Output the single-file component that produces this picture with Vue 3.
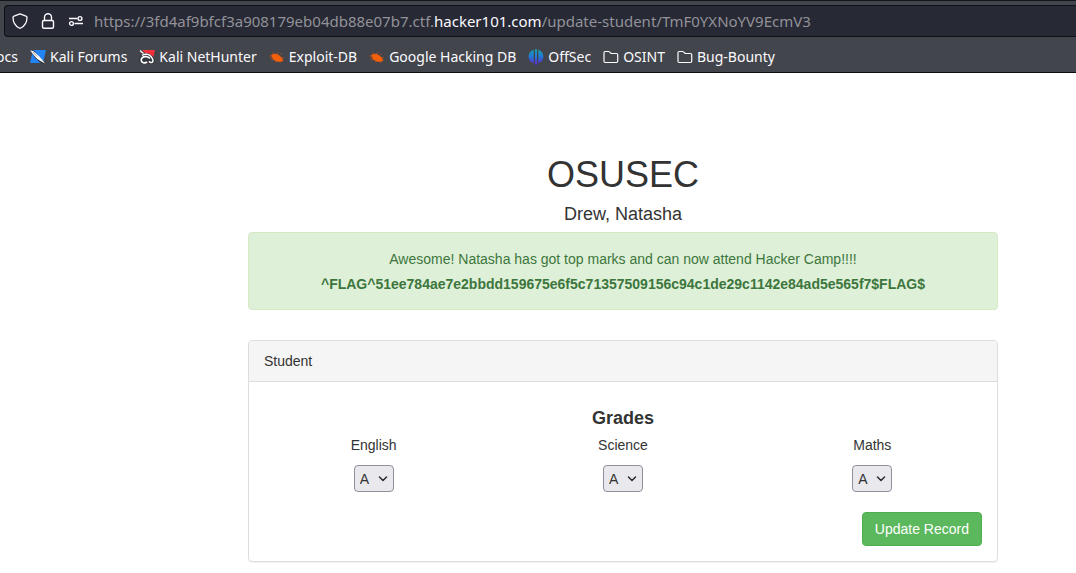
<script setup>
import { reactive } from 'vue'

const bookmarks = [
  { icon: 'forums', label: 'Kali Forums' },
  { icon: 'nethunter', label: 'Kali NetHunter' },
  { icon: 'exploit', label: 'Exploit-DB' },
  { icon: 'exploit', label: 'Google Hacking DB' },
  { icon: 'offsec', label: 'OffSec' },
  { icon: 'folder', label: 'OSINT' },
  { icon: 'folder', label: 'Bug-Bounty' },
]

const grades = reactive([
  { id: 'english', subject: 'English', value: 'A' },
  { id: 'science', subject: 'Science', value: 'A' },
  { id: 'maths', subject: 'Maths', value: 'A' },
])
const options = ['A', 'B', 'C', 'D', 'E', 'F']
</script>

<template>
  <div class="window">
    <header class="chrome">
      <div class="address">
        <button class="tool" type="button" aria-label="Tracking protection">
          <svg width="16" height="16" viewBox="0 0 16 16" fill="none" stroke="#fbfbfe" stroke-width="1.3" stroke-linejoin="round">
            <path d="M8 .8 14 3.1c.6.2 1 .6 1 1.2 0 5-2.300 8.700-6.200 10.700-.5.3-1.100.3-1.600 0C3.300 13 1 9.300 1 4.300c0-.6.4-1 1-1.200z" />
          </svg>
        </button>
        <button class="tool" type="button" aria-label="Site security">
          <svg width="16" height="16" viewBox="0 0 16 16" fill="none" stroke="#fbfbfe" stroke-width="1.4">
            <rect x="2.500" y="7.500" width="11" height="7.800" rx="1.500" />
            <path d="M4.500 7.500V4.200a3.500 3.500 0 0 1 7 0v3.300" />
          </svg>
        </button>
        <button class="tool" type="button" aria-label="Site permissions">
          <svg width="16" height="16" viewBox="0 0 16 16" fill="none" stroke="#fbfbfe" stroke-width="1.4">
            <path d="M1 5.500h8.500M6.500 10.500H15" />
            <circle cx="12" cy="5.500" r="1.900" />
            <circle cx="3.500" cy="10.500" r="1.900" />
          </svg>
        </button>
        <div class="url" role="textbox" aria-label="Address" contenteditable="true" spellcheck="false">https://3fd4af9bfcf3a908179eb04db88e07b7.ctf.<span class="domain">hacker101.com</span>/update-student/TmF0YXNoYV9EcmV3</div>
      </div>
      <nav class="bookmarks" aria-label="Bookmarks">
        <a class="bookmark clipped" href="#">Docs</a>
        <a v-for="b in bookmarks" :key="b.label" class="bookmark" href="#">
          <svg v-if="b.icon === 'forums'" width="16" height="16" viewBox="0 0 16 16">
            <path d="M3 1h13l-3 13H0z" fill="#2384f5" />
            <path d="M0 1 4 1.500 8.500 7l7.500 7.500-2 1-4-2-5-4.500z" fill="#30343c" />
            <path d="m0 1.300 3.500 1L9 7l3 3.500 3.300 4.200-4.800-2.700-3.300-2L4.500 7z" fill="#fff" />
            <path d="m3 3 4 4.500" stroke="#8d939c" stroke-width=".8" />
          </svg>
          <svg v-else-if="b.icon === 'nethunter'" width="16" height="16" viewBox="0 0 16 16">
            <path d="M3 1h13l-3 13H2z" fill="#f3303b" />
            <path d="M0 1h3l3 3 4 .5 4 3 2 4-2 3-3 .5-3-2-3 2H3L0 12l1-5 2-2z" fill="#30343c" />
            <path d="M1 1.500 4.500 4.500M3 6.500C6 4.500 10 5 12 7.500s2.300 4.500 1.500 5.500-2.500.5-3.500-.8" fill="none" stroke="#fff" stroke-width="1.500" />
            <path d="M11 9.500C9 7.500 5.500 7 3.500 8.500s-1.700 4.500.8 5.200c1.500.4 2.700 0 3.700-.9" fill="none" stroke="#fff" stroke-width="1.700" />
          </svg>
          <svg v-else-if="b.icon === 'exploit'" width="16" height="16" viewBox="0 0 16 16">
            <path d="M2 6 5 4.700 8 5l3 2 2.500 2.500.5 2.500-3 1-3.500-.5L4 10.500z" fill="#f2600c" />
            <path d="m5 5-2-1.500M8 5l1-2M10 6.500l3-2M12 8.500h3M13 11l2 .5M11 12l1 2M7 12l-1 1.500M4.500 10.500 2 11M3 7H0M3.500 8.500 1 9" fill="none" stroke="#b54c1e" stroke-width=".7" />
          </svg>
          <svg v-else-if="b.icon === 'offsec'" width="16" height="16" viewBox="0 0 16 16">
            <defs>
              <linearGradient id="offsec-fill" x1="0" y1="0" x2="0" y2="1">
                <stop offset="0" stop-color="#16a8b5" />
                <stop offset=".5" stop-color="#2474d2" />
                <stop offset="1" stop-color="#6527d8" />
              </linearGradient>
            </defs>
            <path d="M5.700.8v13.400C2.800 13.200.6 11 .6 7.500S2.800 1.800 5.700.8zM7 .3h2v15.200H7zM10.300.8c2.900 1 5.100 3.200 5.100 6.700s-2.200 5.700-5.100 6.700z" fill="url(#offsec-fill)" />
          </svg>
          <svg v-else width="16" height="16" viewBox="0 0 16 16" fill="none" stroke="#fbfbfe" stroke-width="1.200" stroke-linejoin="round">
            <path d="M1 3.700c0-.7.500-1.200 1.200-1.200h3.300c.4 0 .7.1 1 .4l1.700 1.600h5.300c.7 0 1.200.5 1.200 1.200v6.600c0 .7-.5 1.200-1.200 1.200H2.200c-.7 0-1.200-.5-1.200-1.200z" />
          </svg>
          <span>{{ b.label }}</span>
        </a>
      </nav>
    </header>

    <main class="page">
      <h1>OSUSEC</h1>
      <h2>Drew, Natasha</h2>
      <div class="alert" role="status">
        <p>Awesome! Natasha has got top marks and can now attend Hacker Camp!!!!</p>
        <p><strong>^FLAG^51ee784ae7e2bbdd159675e6f5c71357509156c94c1de29c1142e84ad5e565f7$FLAG$</strong></p>
      </div>
      <section class="panel">
        <div class="panel-heading">Student</div>
        <form class="panel-body" @submit.prevent>
          <h3>Grades</h3>
          <div class="grades">
            <div v-for="g in grades" :key="g.id" class="grade">
              <label :for="g.id">{{ g.subject }}</label>
              <div class="picker">
                <select :id="g.id" v-model="g.value">
                  <option v-for="o in options" :key="o">{{ o }}</option>
                </select>
                <svg class="chevron" width="10" height="6" viewBox="0 0 10 6" fill="none" stroke="#2b2a33" stroke-width="1.500" stroke-linecap="round" stroke-linejoin="round">
                  <path d="m1.500 1 3.500 3.500L8.500 1" />
                </svg>
              </div>
            </div>
          </div>
          <div class="actions">
            <button class="update" type="submit">Update Record</button>
          </div>
        </form>
      </section>
    </main>
  </div>
</template>

<style>
body {
  margin: 0;
  background: #fff;
}
</style>

<style scoped>
* {
  box-sizing: border-box;
}

.window {
  overflow: hidden;
  font-family: "Liberation Sans", Arial, sans-serif;
  font-size: 14px;
  line-height: 20px;
  color: #333;
}

.chrome {
  background: #43454c;
  border-top: 1px solid #15161b;
  border-bottom: 1px solid #0c0c0d;
  padding-top: 4px;
  font-family: "Noto Sans", sans-serif;
}

.address {
  display: flex;
  align-items: center;
  height: 32px;
  margin-left: 4px;
  padding-left: 1px;
  background: #272935;
  border: 1px solid #101116;
  border-right: 0;
  border-radius: 4px 0 0 4px;
}

.tool {
  display: flex;
  align-items: center;
  justify-content: center;
  width: 28px;
  height: 28px;
  padding: 0;
  border: 0;
  background: none;
}

.url {
  margin-left: 4px;
  font-size: 15px;
  white-space: nowrap;
  color: #929298;
  outline: 0;
}

.domain {
  color: #fbfbfe;
}

.bookmarks {
  display: flex;
  align-items: center;
  gap: 12px;
  height: 35px;
  padding-top: 4px;
}

.bookmark {
  display: flex;
  flex-shrink: 0;
  align-items: center;
  gap: 4px;
  white-space: nowrap;
  color: #fbfbfe;
  text-decoration: none;
}

.clipped {
  justify-content: flex-end;
  width: 18px;
  overflow: hidden;
}

.page {
  padding: 82px 78px 11px 248px;
  text-align: center;
}

h1,
h2,
h3,
p {
  margin: 0;
}

h1 {
  margin-bottom: 9px;
  font-size: 36px;
  line-height: 40px;
  font-weight: 400;
}

h2,
h3 {
  font-size: 18px;
  line-height: 20px;
}

h2 {
  margin-bottom: 8px;
  font-weight: 400;
}

.alert {
  padding: 16px 15px 15px;
  margin-bottom: 30px;
  border: 1px solid #d6e9c6;
  border-radius: 4px;
  background: #dff0d8;
  color: #3c763d;
}

.alert p + p {
  margin-top: 5px;
}

.panel {
  border: 1px solid #ddd;
  border-radius: 4px;
  box-shadow: 0 1px 1px rgba(0, 0, 0, 0.05);
}

.panel-heading {
  padding: 10px 15px;
  border-bottom: 1px solid #ddd;
  border-radius: 3px 3px 0 0;
  background: #f5f5f5;
  text-align: left;
}

.panel-body {
  padding: 26px 15px 15px;
}

h3 {
  margin-bottom: 7px;
}

.grades {
  display: grid;
  grid-template-columns: repeat(3, 1fr);
  margin: 0 -15px;
}

.grade {
  display: flex;
  flex-direction: column;
  align-items: center;
  gap: 10px;
}

.picker {
  position: relative;
}

select {
  display: block;
  appearance: none;
  width: 40px;
  height: 27px;
  padding: 0 5px;
  border: 1px solid #8f8f9d;
  border-radius: 4px;
  background: #e9e9ed;
  color: #333;
  font: inherit;
}

.chevron {
  position: absolute;
  top: 11px;
  right: 6px;
  pointer-events: none;
}

.actions {
  margin-top: 20px;
  text-align: right;
}

.update {
  padding: 6px 12px;
  border: 1px solid #4cae4c;
  border-radius: 4px;
  background: #5cb85c;
  color: #fff;
  font: inherit;
}
</style>
